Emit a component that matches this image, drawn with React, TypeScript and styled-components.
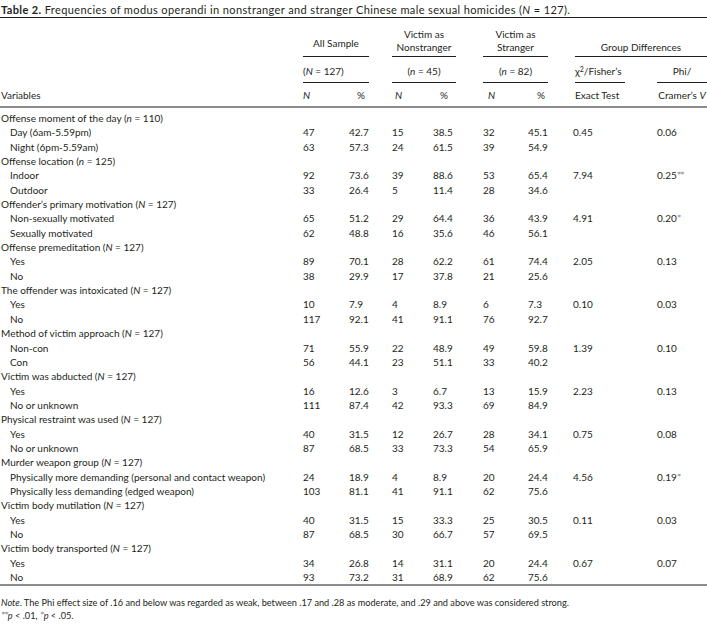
import React from "react";
import styled, { createGlobalStyle } from "styled-components";

const Global = createGlobalStyle`
  html, body { margin: 0; padding: 0; background: #fff; }
  body { font-family: "Lato", "Open Sans", sans-serif; color: #231f20; }
`;

const Page = styled.div`
  width: 707px;
  font-size: 10px;
`;

const Caption = styled.div`
  font-size: 11px;
  letter-spacing: 0.38px;
  line-height: 14px;
  padding: 3px 0 0 1px;
  height: 14px;
  border-bottom: 1px solid #231f20;
  white-space: nowrap;
`;

const Bold = styled.b`
  font-weight: 700;
`;

const I = styled.i`
  font-style: italic;
`;

const Table = styled.table`
  width: 707px;
  table-layout: fixed;
  border-collapse: collapse;
  border-spacing: 0;
`;

const HeadRow = styled.tr<{ $pt: number; $pb: number; $thick?: boolean }>`
  ${(p) => (p.$thick ? "border-bottom: 2px solid #8c8c8c;" : "")}
  & > th {
    padding: ${(p) => p.$pt}px 0 ${(p) => p.$pb}px 0;
  }
`;

const Th = styled.th`
  font-weight: 400;
  text-align: left;
  vertical-align: bottom;
  line-height: 13px;
  white-space: nowrap;
`;

const SpanRule = styled.div<{ $w: number; $align?: string; $ml?: number; $pb?: number }>`
  width: ${(p) => p.$w}px;
  margin-left: ${(p) => p.$ml ?? 0}px;
  text-align: ${(p) => p.$align ?? "center"};
  border-bottom: 1px solid #231f20;
  padding-bottom: ${(p) => p.$pb ?? 2.5}px;
`;

const HeadText = styled.div<{ $w?: number; $ml?: number; $align?: string }>`
  width: ${(p) => (p.$w ? `${p.$w}px` : "auto")};
  margin-left: ${(p) => p.$ml ?? 0}px;
  text-align: ${(p) => p.$align ?? "left"};
`;

const Row = styled.tr<{ $last?: boolean }>`
  height: 14.35px;
  ${(p) => (p.$last ? "border-bottom: 2px solid #8c8c8c;" : "")}
`;

const Spacer = styled.tr`
  height: 4px;
`;

const Cell = styled.td<{ $indent?: boolean }>`
  padding: 0 0 0 ${(p) => (p.$indent ? 10 : 1)}px;
  line-height: 14.35px;
  white-space: nowrap;
  vertical-align: middle;
`;

const Num = styled.td`
  padding: 0;
  line-height: 14.35px;
  white-space: nowrap;
`;

const Stars = styled.span`
  display: inline-block;
  height: 8px;
  line-height: 8px;
  vertical-align: 2px;
  font-family: "DejaVu Sans", sans-serif;
  font-size: 7.5px;
  color: #808080;
  margin-left: 0.5px;
  letter-spacing: -0.6px;
`;

const Sup = styled.sup`
  font-size: 7px;
  vertical-align: 3.5px;
  line-height: 0;
`;

const Notes = styled.div`
  padding-top: 10px;
  font-size: 9.2px;
  line-height: 13px;
  padding-left: 1px;
`;

type DataRow = {
  label: React.ReactNode;
  sub?: boolean;
  v?: string[];
  chi?: string;
  phi?: React.ReactNode;
};

const grp = (name: string, n: "n" | "N", count: number): DataRow => ({
  label: (
    <>
      {name} (<I>{n}</I> = {count})
    </>
  ),
});

const rows: DataRow[] = [
  grp("Offense moment of the day", "n", 110),
  { label: "Day (6am-5.59pm)", sub: true, v: ["47", "42.7", "15", "38.5", "32", "45.1"], chi: "0.45", phi: "0.06" },
  { label: "Night (6pm-5.59am)", sub: true, v: ["63", "57.3", "24", "61.5", "39", "54.9"] },
  grp("Offense location", "n", 125),
  { label: "Indoor", sub: true, v: ["92", "73.6", "39", "88.6", "53", "65.4"], chi: "7.94", phi: <>0.25<Stars>**</Stars></> },
  { label: "Outdoor", sub: true, v: ["33", "26.4", "5", "11.4", "28", "34.6"] },
  grp("Offender\u2019s primary motivation", "N", 127),
  { label: "Non-sexually motivated", sub: true, v: ["65", "51.2", "29", "64.4", "36", "43.9"], chi: "4.91", phi: <>0.20<Stars>*</Stars></> },
  { label: "Sexually motivated", sub: true, v: ["62", "48.8", "16", "35.6", "46", "56.1"] },
  grp("Offense premeditation", "N", 127),
  { label: "Yes", sub: true, v: ["89", "70.1", "28", "62.2", "61", "74.4"], chi: "2.05", phi: "0.13" },
  { label: "No", sub: true, v: ["38", "29.9", "17", "37.8", "21", "25.6"] },
  grp("The offender was intoxicated", "N", 127),
  { label: "Yes", sub: true, v: ["10", "7.9", "4", "8.9", "6", "7.3"], chi: "0.10", phi: "0.03" },
  { label: "No", sub: true, v: ["117", "92.1", "41", "91.1", "76", "92.7"] },
  grp("Method of victim approach", "N", 127),
  { label: "Non-con", sub: true, v: ["71", "55.9", "22", "48.9", "49", "59.8"], chi: "1.39", phi: "0.10" },
  { label: "Con", sub: true, v: ["56", "44.1", "23", "51.1", "33", "40.2"] },
  grp("Victim was abducted", "N", 127),
  { label: "Yes", sub: true, v: ["16", "12.6", "3", "6.7", "13", "15.9"], chi: "2.23", phi: "0.13" },
  { label: "No or unknown", sub: true, v: ["111", "87.4", "42", "93.3", "69", "84.9"] },
  grp("Physical restraint was used", "N", 127),
  { label: "Yes", sub: true, v: ["40", "31.5", "12", "26.7", "28", "34.1"], chi: "0.75", phi: "0.08" },
  { label: "No or unknown", sub: true, v: ["87", "68.5", "33", "73.3", "54", "65.9"] },
  grp("Murder weapon group", "N", 127),
  { label: "Physically more demanding (personal and contact weapon)", sub: true, v: ["24", "18.9", "4", "8.9", "20", "24.4"], chi: "4.56", phi: <>0.19<Stars>*</Stars></> },
  { label: "Physically less demanding (edged weapon)", sub: true, v: ["103", "81.1", "41", "91.1", "62", "75.6"] },
  grp("Victim body mutilation", "N", 127),
  { label: "Yes", sub: true, v: ["40", "31.5", "15", "33.3", "25", "30.5"], chi: "0.11", phi: "0.03" },
  { label: "No", sub: true, v: ["87", "68.5", "30", "66.7", "57", "69.5"] },
  grp("Victim body transported", "N", 127),
  { label: "Yes", sub: true, v: ["34", "26.8", "14", "31.1", "20", "24.4"], chi: "0.67", phi: "0.07" },
  { label: "No", sub: true, v: ["93", "73.2", "31", "68.9", "62", "75.6"] },
];

const colWidths = [303, 46, 43, 41, 50, 45, 45, 84, 50];

export default function App() {
  return (
    <Page>
      <Global />
      <Caption>
        <Bold>Table 2.</Bold> Frequencies of modus operandi in nonstranger and stranger Chinese male sexual homicides (<I>N</I> = 127).
      </Caption>
      <Table>
        <colgroup>
          {colWidths.map((w, i) => (
            <col key={i} style={{ width: w }} />
          ))}
        </colgroup>
        <thead>
          <HeadRow $pt={9.5} $pb={0}>
            <Th />
            <Th colSpan={2}>
              <SpanRule $w={66} $pb={6.5}>All Sample</SpanRule>
            </Th>
            <Th colSpan={2}>
              <SpanRule $w={64}>
                Victim as
                <br />
                Nonstranger
              </SpanRule>
            </Th>
            <Th colSpan={2}>
              <SpanRule $w={65}>
                Victim as
                <br />
                Stranger
              </SpanRule>
            </Th>
            <Th colSpan={2}>
              <SpanRule $w={132} $ml={2}>Group Differences</SpanRule>
            </Th>
          </HeadRow>
          <HeadRow $pt={7.5} $pb={0}>
            <Th />
            <Th colSpan={2}>
              <SpanRule $w={66} $align="left" $pb={4.5}>
                (<I>N</I> = 127)
              </SpanRule>
            </Th>
            <Th colSpan={2}>
              <SpanRule $w={64} $pb={4.5}>
                (<I>n</I> = 45)
              </SpanRule>
            </Th>
            <Th colSpan={2}>
              <SpanRule $w={65} $pb={4.5}>
                (<I>n</I> = 82)
              </SpanRule>
            </Th>
            <Th>
              <SpanRule $w={50} $ml={2} $align="left" $pb={4.5}>
                {"\u03c7"}
                <Sup>2</Sup>/Fisher{"\u2019"}s
              </SpanRule>
            </Th>
            <Th>
              <SpanRule $w={50} $pb={4.5}>Phi/</SpanRule>
            </Th>
          </HeadRow>
          <HeadRow $pt={5.5} $pb={4.5} $thick>
            <Th>
              <HeadText $ml={1}>Variables</HeadText>
            </Th>
            <Th>
              <HeadText>
                <I>N</I>
              </HeadText>
            </Th>
            <Th>
              <HeadText $ml={8}>%</HeadText>
            </Th>
            <Th>
              <HeadText $ml={3}>
                <I>N</I>
              </HeadText>
            </Th>
            <Th>
              <HeadText $ml={7}>%</HeadText>
            </Th>
            <Th>
              <HeadText $ml={5}>
                <I>N</I>
              </HeadText>
            </Th>
            <Th>
              <HeadText $ml={9}>%</HeadText>
            </Th>
            <Th>
              <HeadText $ml={2}>Exact Test</HeadText>
            </Th>
            <Th>
              <HeadText $w={50} $align="center">
                Cramer{"\u2019"}s <I>V</I>
              </HeadText>
            </Th>
          </HeadRow>
        </thead>
        <tbody>
          <Spacer />
          {rows.map((r, i) => (
            <Row key={i} $last={i === rows.length - 1}>
              <Cell $indent={r.sub}>{r.label}</Cell>
              {(r.v ?? ["", "", "", "", "", ""]).map((x, j) => (
                <Num key={j}>{x}</Num>
              ))}
              <Num>{r.chi ?? ""}</Num>
              <Num>{r.phi ?? ""}</Num>
            </Row>
          ))}
        </tbody>
      </Table>
      <Notes>
        <I>Note</I>. The Phi effect size of .16 and below was regarded as weak, between .17 and .28 as moderate, and .29 and above was considered strong.
        <br />
        <Stars>**</Stars>
        <I>p</I> &lt; .01, <Stars>*</Stars>
        <I>p</I> &lt; .05.
      </Notes>
    </Page>
  );
}
